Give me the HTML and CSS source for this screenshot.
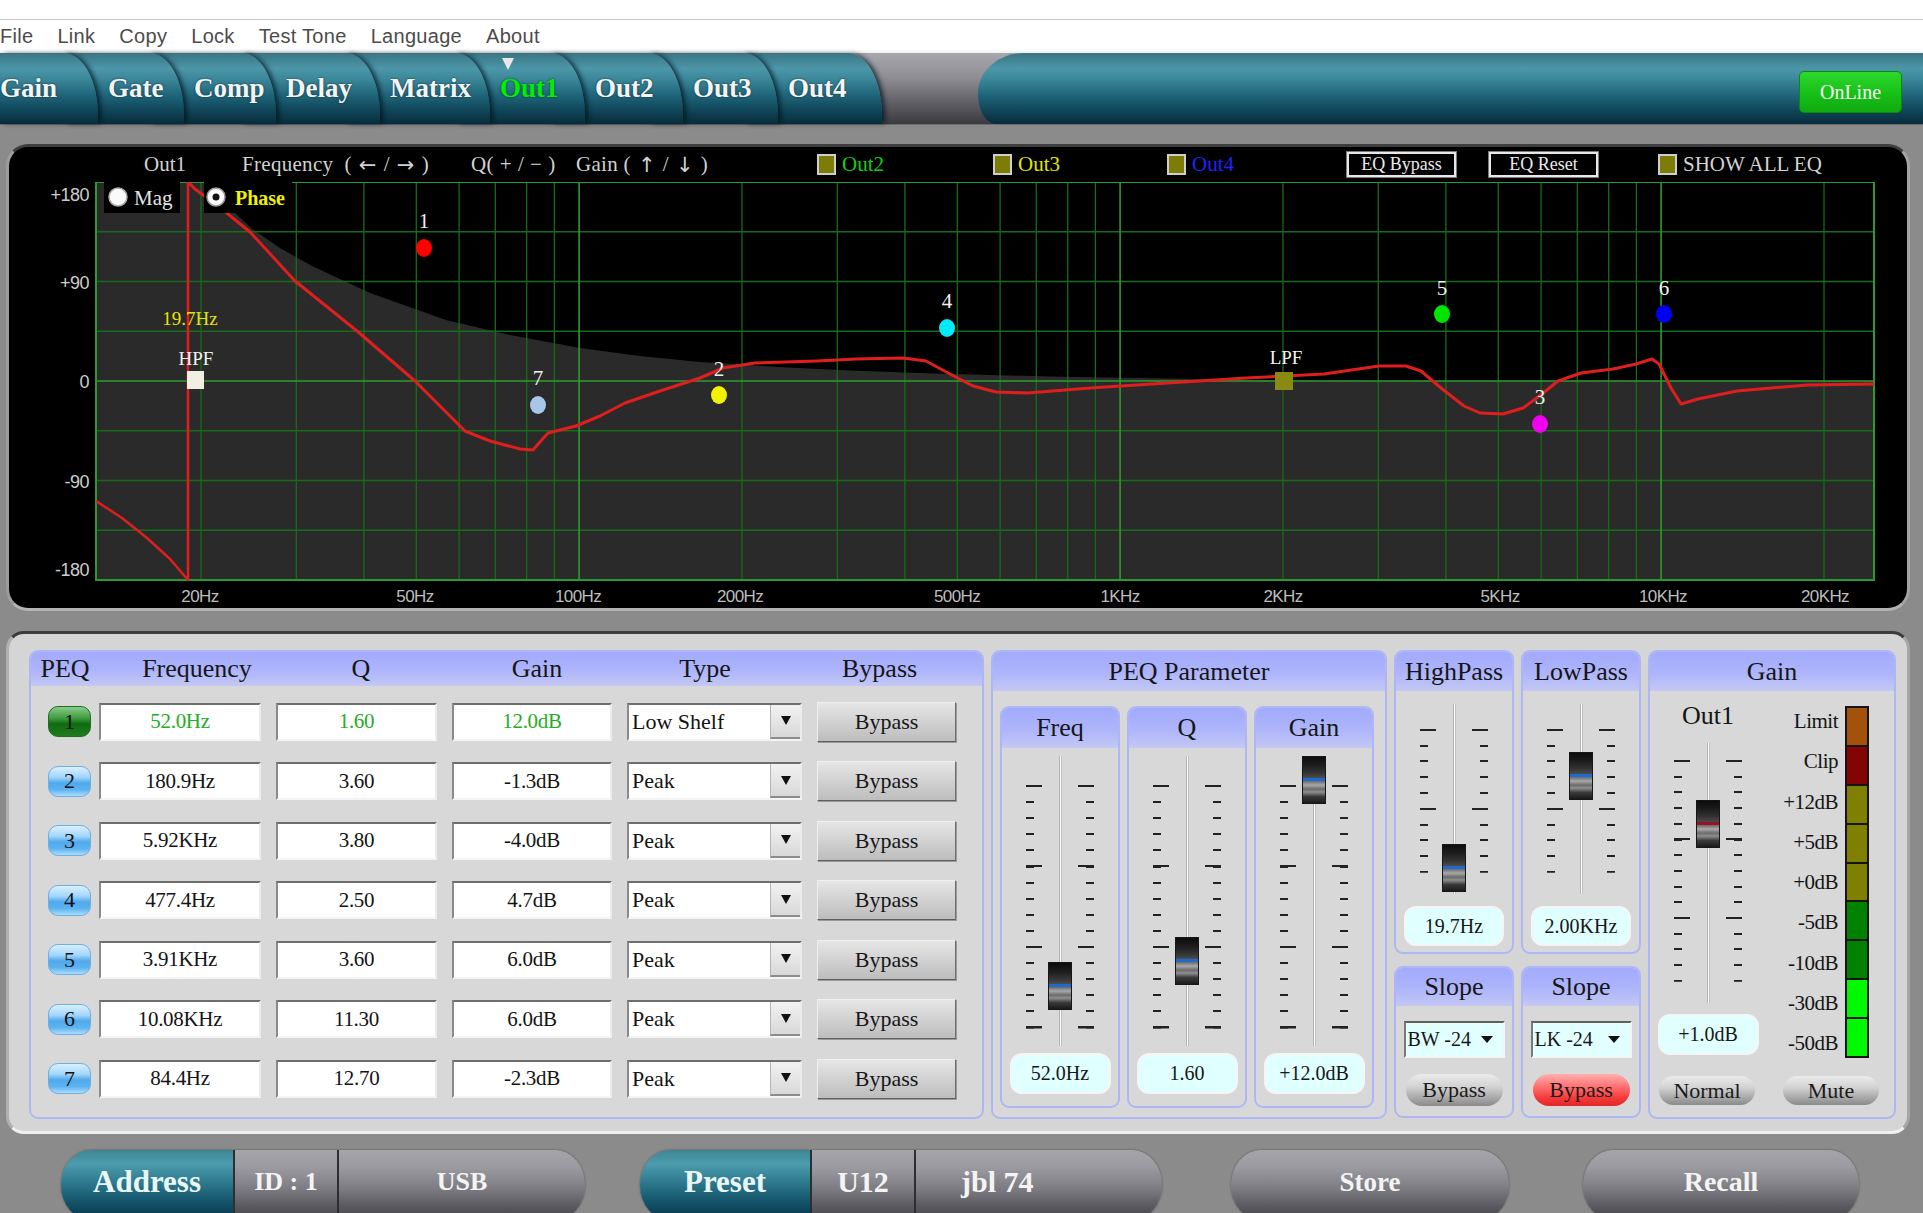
FILE: index.html
```html
<!DOCTYPE html>
<html>
<head>
<meta charset="utf-8">
<link rel="stylesheet" href="styles.css">
</head>
<body>
<div class="topline"></div>
<nav class="menubar">
  <span>File</span><span>Link</span><span>Copy</span><span>Lock</span><span>Test Tone</span><span>Language</span><span>About</span>
</nav>
<div class="tabbar">
  <div class="tabs">
    <div class="tab">Gain</div>
    <div class="tab">Gate</div>
    <div class="tab">Comp</div>
    <div class="tab">Delay</div>
    <div class="tab">Matrix</div>
    <div class="tab active">Out1</div>
    <div class="tab">Out2</div>
    <div class="tab">Out3</div>
    <div class="tab">Out4</div>
  </div>
  <div class="statusbar"><div class="online">OnLine</div></div>
</div>

<section class="graph">
  <div class="graph-head">
    <span class="gh">Out1</span>
    <span class="gh wide">Frequency&nbsp; (<span class="arr">←</span>/<span class="arr">→</span>)</span>
    <span class="gh wide">Q(<span class="arr2">+</span>/<span class="arr2">−</span>)</span>
    <span class="gh wide">Gain (<span class="arr">↑</span>/<span class="arr">↓</span>)</span>
    <span class="gh c-out2"><i class="chk"></i>Out2</span>
    <span class="gh c-out3"><i class="chk"></i>Out3</span>
    <span class="gh c-out4"><i class="chk"></i>Out4</span>
    <span class="gh"><span class="eqbtn">EQ Bypass</span></span>
    <span class="gh"><span class="eqbtn">EQ Reset</span></span>
    <span class="gh"><i class="chk"></i>SHOW ALL EQ</span>
  </div>
  <svg class="plot" width="1898" height="426" viewBox="9 181 1898 426" xmlns="http://www.w3.org/2000/svg">
    <rect x="96" y="181" width="1778" height="398" fill="#000"/>
    <path class="shade" d="M96 181 L214 181 L232 209 L252 228 L280 247 L312 265 L370 292 L446 319 L510 334 L580 347 L640 355 L700 361 L778 366 L850 369.5 L934 372.5 L1050 375.5 L1168 377.5 L1324 380 L1874 380 L1874 579 L96 579 Z"/>
    <path class="grid" d="M201 181V579M296.3 181V579M363.9 181V579M416.3 181V579M459.1 181V579M495.3 181V579M526.7 181V579M554.4 181V579M742 181V579M837.3 181V579M904.9 181V579M957.3 181V579M1000.1 181V579M1036.3 181V579M1067.7 181V579M1095.4 181V579M1283 181V579M1378.3 181V579M1445.9 181V579M1498.3 181V579M1541.1 181V579M1577.3 181V579M1608.7 181V579M1636.4 181V579M1824 181V579M96 230.75H1874M96 280.5H1874M96 330.25H1874M96 429.75H1874M96 479.5H1874M96 529.25H1874"/>
    <path class="grid-major" d="M579.1 181V579M1120.1 181V579M1661.1 181V579M96 380H1874"/>
    <rect class="frame" x="96" y="181" width="1778" height="398"/>

    <path class="phase-wrap" d="M96 500 L122 517 L147 537 L170 558 L188 579 L188 181"/>
    <path class="phase" d="M188 181 L195 188 L223 209 L250 231 L295 280 L357 330 L415 380 L445 410 L465 430 L490 440 L520 448 L533 449 L539 442 L548 432 L576 425 L600 415 L625 402 L660 390 L700 377 L723 367 L755 362 L817 360 L856 358 L903 357 L926 360 L950 373 L973 385 L996 391 L1028 392 L1090 387 L1168 382 L1246 377 L1285 375 L1324 373 L1379 365 L1406 365 L1421 370 L1441 387 L1464 405 L1480 412 L1503 413 L1523 407 L1542 393 L1558 380 L1581 372 L1613 368 L1636 363 L1652 358 L1659 363 L1671 387 L1681 403 L1698 398 L1737 390 L1808 384 L1874 383"/>

    <rect x="104" y="181" width="76" height="31" fill="#000"/>
    <circle cx="118" cy="196" r="9" fill="#fafafa" stroke="#aaa" stroke-width="1.5"/>
    <text class="mag" x="134" y="197">Mag</text>
    <rect x="204" y="181" width="88" height="31" fill="#000"/>
    <circle cx="216" cy="196" r="9" fill="#fafafa" stroke="#999" stroke-width="1.5"/>
    <circle cx="216" cy="196" r="3.5" fill="#111"/>
    <text class="phase-t" x="235" y="197">Phase</text>

    <text class="hz-y" x="190" y="317">19.7Hz</text>
    <text class="ptlab sm" x="196" y="357">HPF</text>
    <rect x="187" y="370" width="17" height="18" fill="#f2eee4"/>
    <text class="ptlab sm" x="1286" y="356">LPF</text>
    <rect x="1275" y="371" width="18" height="18" fill="#8a8a12"/>

    <text class="ptlab" x="424" y="220">1</text><ellipse cx="424" cy="247" rx="8" ry="9" fill="#ff0000"/>
    <text class="ptlab" x="538" y="377">7</text><ellipse cx="538" cy="404" rx="8" ry="9" fill="#a6c6ea"/>
    <text class="ptlab" x="719" y="368">2</text><ellipse cx="719" cy="394" rx="8" ry="9" fill="#f2f200"/>
    <text class="ptlab" x="947" y="300">4</text><ellipse cx="947" cy="327" rx="8" ry="9" fill="#00eaf8"/>
    <text class="ptlab" x="1442" y="287">5</text><ellipse cx="1442" cy="313" rx="8" ry="9" fill="#00e400"/>
    <text class="ptlab" x="1540" y="396">3</text><ellipse cx="1540" cy="423" rx="8" ry="9" fill="#f000f0"/>
    <text class="ptlab" x="1664" y="287">6</text><ellipse cx="1664" cy="313" rx="8" ry="9" fill="#0000f2"/>

    <text class="ylab" x="89" y="194">+180</text>
    <text class="ylab" x="89" y="282">+90</text>
    <text class="ylab" x="89" y="381">0</text>
    <text class="ylab" x="89" y="481">-90</text>
    <text class="ylab" x="89" y="569">-180</text>

    <text class="xlab" x="200" y="595">20Hz</text>
    <text class="xlab" x="415" y="595">50Hz</text>
    <text class="xlab" x="578" y="595">100Hz</text>
    <text class="xlab" x="740" y="595">200Hz</text>
    <text class="xlab" x="957" y="595">500Hz</text>
    <text class="xlab" x="1120" y="595">1KHz</text>
    <text class="xlab" x="1283" y="595">2KHz</text>
    <text class="xlab" x="1500" y="595">5KHz</text>
    <text class="xlab" x="1663" y="595">10KHz</text>
    <text class="xlab" x="1825" y="595">20KHz</text>
  </svg>
</section>

<section class="panel">
  <div class="sect peq">
    <div class="sect-h peq-h">
      <span>PEQ</span><span>Frequency</span><span>Q</span><span>Gain</span><span>Type</span><span class="bp-h">Bypass</span>
    </div>
    <div class="rows">
      <div class="row sel-row">
        <div class="badge green">1</div>
        <div class="fld">52.0Hz</div><div class="fld">1.60</div><div class="fld">12.0dB</div>
        <div class="sel"><span>Low Shelf</span><i class="sel-btn"></i></div>
        <div class="bpbtn">Bypass</div>
      </div>
      <div class="row">
        <div class="badge">2</div>
        <div class="fld">180.9Hz</div><div class="fld">3.60</div><div class="fld">-1.3dB</div>
        <div class="sel"><span>Peak</span><i class="sel-btn"></i></div>
        <div class="bpbtn">Bypass</div>
      </div>
      <div class="row">
        <div class="badge">3</div>
        <div class="fld">5.92KHz</div><div class="fld">3.80</div><div class="fld">-4.0dB</div>
        <div class="sel"><span>Peak</span><i class="sel-btn"></i></div>
        <div class="bpbtn">Bypass</div>
      </div>
      <div class="row">
        <div class="badge">4</div>
        <div class="fld">477.4Hz</div><div class="fld">2.50</div><div class="fld">4.7dB</div>
        <div class="sel"><span>Peak</span><i class="sel-btn"></i></div>
        <div class="bpbtn">Bypass</div>
      </div>
      <div class="row">
        <div class="badge">5</div>
        <div class="fld">3.91KHz</div><div class="fld">3.60</div><div class="fld">6.0dB</div>
        <div class="sel"><span>Peak</span><i class="sel-btn"></i></div>
        <div class="bpbtn">Bypass</div>
      </div>
      <div class="row">
        <div class="badge">6</div>
        <div class="fld">10.08KHz</div><div class="fld">11.30</div><div class="fld">6.0dB</div>
        <div class="sel"><span>Peak</span><i class="sel-btn"></i></div>
        <div class="bpbtn">Bypass</div>
      </div>
      <div class="row">
        <div class="badge">7</div>
        <div class="fld">84.4Hz</div><div class="fld">12.70</div><div class="fld">-2.3dB</div>
        <div class="sel"><span>Peak</span><i class="sel-btn"></i></div>
        <div class="bpbtn">Bypass</div>
      </div>
    </div>
  </div>

  <div class="sect param">
    <div class="sect-h">PEQ Parameter</div>
    <div class="subs">
      <div class="sect sub">
        <div class="sect-h sub-h">Freq</div>
        <div class="fader f-peq"><div class="knob" style="top:206px"></div></div>
        <div class="val">52.0Hz</div>
      </div>
      <div class="sect sub">
        <div class="sect-h sub-h">Q</div>
        <div class="fader f-peq"><div class="knob" style="top:181px"></div></div>
        <div class="val">1.60</div>
      </div>
      <div class="sect sub">
        <div class="sect-h sub-h">Gain</div>
        <div class="fader f-peq"><div class="knob" style="top:0px"></div></div>
        <div class="val">+12.0dB</div>
      </div>
    </div>
  </div>

  <div class="col">
    <div class="sect pass">
      <div class="sect-h">HighPass</div>
      <div class="fader f-pass"><div class="knob" style="top:140px"></div></div>
      <div class="val">19.7Hz</div>
    </div>
    <div class="sect slope">
      <div class="sect-h slope-h">Slope</div>
      <div class="slope-sel"><span>BW -24</span><i class="tri"></i></div>
      <div class="pillbtn">Bypass</div>
    </div>
  </div>

  <div class="col">
    <div class="sect pass">
      <div class="sect-h">LowPass</div>
      <div class="fader f-pass"><div class="knob" style="top:48px"></div></div>
      <div class="val">2.00KHz</div>
    </div>
    <div class="sect slope">
      <div class="sect-h slope-h">Slope</div>
      <div class="slope-sel"><span>LK -24</span><i class="tri"></i></div>
      <div class="pillbtn red">Bypass</div>
    </div>
  </div>

  <div class="sect gain">
    <div class="sect-h">Gain</div>
    <div class="gain-body">
      <div class="gain-fadercol">
        <div class="out-label">Out1</div>
        <div class="fader f-gain"><div class="knob red" style="top:57px"></div></div>
        <div class="val">+1.0dB</div>
      </div>
      <div class="meter-labels">
        <span>Limit</span><span>Clip</span><span>+12dB</span><span>+5dB</span><span>+0dB</span><span>-5dB</span><span>-10dB</span><span>-30dB</span><span>-50dB</span>
      </div>
      <div class="meter">
        <i class="m-limit"></i><i class="m-clip"></i><i class="m-olive"></i><i class="m-olive"></i><i class="m-olive"></i><i class="m-green"></i><i class="m-green"></i><i class="m-lime"></i><i class="m-lime"></i>
      </div>
    </div>
    <div class="gain-btns"><div class="pillbtn">Normal</div><div class="pillbtn">Mute</div></div>
  </div>
</section>

<footer class="bottombar">
  <div class="pill addr">
    <div class="seg teal s-addr">Address</div>
    <div class="seg grey s-id">ID : 1</div>
    <div class="seg grey s-usb">USB</div>
  </div>
  <div class="pill preset">
    <div class="seg teal s-preset">Preset</div>
    <div class="seg grey s-u12">U12</div>
    <div class="seg grey s-name">jbl 74</div>
  </div>
  <div class="pill single store"><div class="seg grey">Store</div></div>
  <div class="pill single recall"><div class="seg grey">Recall</div></div>
</footer>
</body>
</html>
```

FILE: styles.css
```css
html, body {
  margin: 0;
  padding: 0;
}
body {
  width: 1923px;
  height: 1213px;
  overflow: hidden;
  background: #8b8b8b;
  font-family: "Liberation Serif", "Times New Roman", serif;
  color: #141414;
}

/* ---------- top menu ---------- */
.topline {
  height: 19px;
  background: #fff;
  border-bottom: 1px solid #c6c6c6;
}
.menubar {
  height: 33px;
  background: linear-gradient(#fff 0, #fff 88%, #efefef 100%);
  display: flex;
  align-items: center;
  gap: 24px;
  font-family: "Liberation Sans", Arial, sans-serif;
  font-size: 20px;
  letter-spacing: 0.3px;
  color: #4c4c4c;
}

/* ---------- tab bar ---------- */
.tabbar {
  height: 71px;
  display: flex;
  background: linear-gradient(#a7a7ad 0%, #8d8d93 35%, #5f5f65 70%, #3a3a3f 100%);
  border-bottom: 1px solid #6c6c6c;
}
.tabs {
  display: flex;
  width: 882px;
  flex: none;
}
.tab {
  position: relative;
  flex: none;
  height: 71px;
  display: flex;
  align-items: center;
  box-sizing: border-box;
  margin-left: -36px;
  padding-left: 46px;
  font-weight: bold;
  font-size: 27px;
  color: #f4f4f4;
  text-shadow: 0 0 2px #0a2a36;
  background: linear-gradient(#3a7482 0%, #4b97a9 22%, #3a8598 38%, #1f6479 60%, #0f4457 82%, #072c3c 100%);
  border-top-right-radius: 34px 62px;
  box-shadow: 4px 0 5px -1px rgba(0, 18, 28, 0.75);
}
.tab:nth-child(1) { margin-left: 0; padding-left: 0; width: 98px; z-index: 9; }
.tab:nth-child(2) { width: 122px; z-index: 8; }
.tab:nth-child(3) { width: 128px; z-index: 7; }
.tab:nth-child(4) { width: 140px; z-index: 6; }
.tab:nth-child(5) { width: 146px; z-index: 5; }
.tab:nth-child(6) { width: 131px; z-index: 4; }
.tab:nth-child(7) { width: 134px; z-index: 3; }
.tab:nth-child(8) { width: 131px; z-index: 2; }
.tab:nth-child(9) { width: 140px; z-index: 1; }
.tab.active { color: #00f000; }
.tab.active::before {
  content: "";
  position: absolute;
  left: 48px;
  top: 5px;
  border-left: 6px solid transparent;
  border-right: 6px solid transparent;
  border-top: 12px solid #e8e8e8;
}
.statusbar {
  flex: 1;
  margin-left: 96px;
  display: flex;
  justify-content: flex-end;
  align-items: flex-start;
  padding: 18px 21px 0 0;
  background: linear-gradient(#3a7482 0%, #4b97a9 22%, #3a8598 38%, #1f6479 60%, #0f4457 82%, #072c3c 100%);
  border-radius: 46px 0 0 18px / 40px 0 0 30px;
}
.online {
  width: 103px;
  height: 42px;
  box-sizing: border-box;
  border: 1px solid #0b8a0b;
  border-radius: 5px;
  background: linear-gradient(#2ed82e, #15bd15 60%, #10aa10);
  color: #f4fff4;
  font-size: 20px;
  display: flex;
  align-items: center;
  justify-content: center;
}

/* ---------- graph ---------- */
.graph {
  margin: 19px 0 0 6px;
  width: 1904px;
  height: 467px;
  box-sizing: border-box;
  background: #000;
  border: 3px solid;
  border-color: #3e3e3e #a4a4a4 #b4b4b4 #9c9c9c;
  border-radius: 22px;
}
.graph-head {
  height: 35px;
  box-sizing: border-box;
  padding-left: 135px;
  display: grid;
  grid-template-columns: 98px 229px 105px 241px 176px 174px 180px 142px 169px auto;
  align-items: center;
  font-size: 21px;
  color: #d2d2d2;
}
.gh {
  display: flex;
  align-items: center;
  white-space: nowrap;
}
.gh.wide { letter-spacing: 0.3px; }
.arr {
  font-family: "DejaVu Sans", sans-serif;
  font-size: 21px;
  padding: 0 7px;
}
.arr2 {
  padding: 0 6px;
}
.chk {
  display: inline-block;
  width: 15px;
  height: 17px;
  background: #7c7c06;
  border: 2px solid #cfcfcf;
  margin-right: 6px;
}
.c-out2 { color: #10d010; }
.c-out3 { color: #e2e200; }
.c-out4 { color: #2020ff; }
.eqbtn {
  display: flex;
  align-items: center;
  justify-content: center;
  width: 109px;
  height: 25px;
  box-sizing: border-box;
  border: 2px solid #e8e8e8;
  box-shadow: 0 0 0 1px #7a7a7a;
  font-size: 18px;
  color: #eaeaea;
}
.plot { display: block; }
.shade { fill: #2a2a2a; }
.grid { stroke: #176c17; stroke-width: 1.3; fill: none; }
.grid-major { stroke: #2f9a2f; stroke-width: 1.6; fill: none; }
.frame { fill: none; stroke: #2c9a2c; stroke-width: 2; }
.phase, .phase-wrap {
  fill: none;
  stroke: #e01e1e;
  stroke-width: 3;
  stroke-linejoin: round;
}
.phase-wrap { stroke-width: 2.5; }
.mag {
  font-family: "Liberation Serif", serif;
  font-size: 21px;
  fill: #e4e4e4;
  dominant-baseline: central;
}
.phase-t {
  font-family: "Liberation Serif", serif;
  font-size: 20px;
  font-weight: bold;
  fill: #f0f000;
  dominant-baseline: central;
}
.hz-y {
  font-family: "Liberation Serif", serif;
  font-size: 19px;
  fill: #e6e600;
  text-anchor: middle;
  dominant-baseline: central;
}
.ptlab {
  font-family: "Liberation Serif", serif;
  font-size: 21px;
  fill: #f2f2f2;
  text-anchor: middle;
  dominant-baseline: central;
}
.ptlab.sm { font-size: 19px; }
.ylab {
  font-family: "Liberation Sans", Arial, sans-serif;
  font-size: 18px;
  fill: #cdcdcd;
  text-anchor: end;
  dominant-baseline: central;
  letter-spacing: -0.5px;
}
.xlab {
  font-family: "Liberation Sans", Arial, sans-serif;
  font-size: 17px;
  fill: #bdbdbd;
  text-anchor: middle;
  dominant-baseline: central;
  letter-spacing: -0.6px;
}

/* ---------- lower panel ---------- */
.panel {
  margin: 20px 0 0 6px;
  width: 1904px;
  height: 503px;
  box-sizing: border-box;
  border: 3px solid;
  border-color: #3c3c3c #a6a6a6 #efefef #b0b0b0;
  border-radius: 18px;
  background: #d5d5d5;
  padding: 16px 0 0 20px;
  display: flex;
  align-items: flex-start;
  gap: 7px;
}
.sect {
  box-sizing: border-box;
  background: #d8d8d8;
  border: 2px solid #afb6f6;
  border-radius: 9px;
}
.sect-h {
  height: 39px;
  display: flex;
  align-items: center;
  justify-content: center;
  background: linear-gradient(#a2aafc 0%, #aeb5fb 55%, #c3c8f3 100%);
  border-radius: 7px 7px 0 0;
  font-size: 26px;
  color: #161616;
}

/* PEQ table */
.peq { width: 955px; height: 469px; }
.peq-h {
  height: 34px;
  display: grid;
  grid-template-columns: 68px 196px 132px 220px 116px 1fr;
  justify-items: center;
}
.peq-h .bp-h { justify-self: start; padding-left: 79px; }
.rows {
  padding: 6px 0 0 17px;
  display: grid;
  grid-auto-rows: 59.5px;
}
.row {
  display: grid;
  grid-template-columns: 36px 162px 161px 160px 175px 139px;
  column-gap: 15px;
  align-items: center;
}
.badge {
  width: 43px;
  height: 31px;
  box-sizing: border-box;
  border-radius: 10px;
  border: 1px solid #6eaee0;
  background: linear-gradient(#d9f0ff 0%, #a3d6fb 35%, #50a9ec 55%, #5cb3f0 78%, #acdcff 100%);
  display: flex;
  align-items: center;
  justify-content: center;
  font-size: 22px;
  color: #111;
}
.badge.green {
  border-color: #1f6e1f;
  background: linear-gradient(#8acb8a 0%, #3c9a3c 40%, #116a11 58%, #1e7c1e 100%);
}
.fld {
  height: 38px;
  box-sizing: border-box;
  background: #fff;
  border: 2px solid;
  border-color: #6e6e6e #ececec #f4f4f4 #8a8a8a;
  display: flex;
  align-items: center;
  justify-content: center;
  font-size: 21px;
  color: #141414;
  letter-spacing: -0.3px;
}
.sel-row .fld { color: #25ad25; }
.sel {
  height: 38px;
  box-sizing: border-box;
  background: #fff;
  border: 2px solid;
  border-color: #6e6e6e #ececec #f4f4f4 #8a8a8a;
  display: flex;
  align-items: center;
  justify-content: space-between;
  padding-left: 3px;
  font-size: 22px;
  color: #141414;
}
.sel-btn {
  width: 30px;
  height: 34px;
  box-sizing: border-box;
  background: linear-gradient(#f2f2f2, #d8d8d8);
  border-left: 1px solid #b4b4b4;
  border-bottom: 2px solid #8c8c8c;
  display: flex;
  align-items: center;
  justify-content: center;
}
.sel-btn::after {
  content: "";
  border-left: 5px solid transparent;
  border-right: 5px solid transparent;
  border-top: 9px solid #111;
}
.bpbtn {
  height: 40px;
  box-sizing: border-box;
  background: linear-gradient(#e6e6e6, #cdcdcd 60%, #bdbdbd);
  border: 1px solid;
  border-color: #f0f0f0 #6f6f6f #5f5f5f #efefef;
  box-shadow: 1px 1px 0 #9a9a9a;
  display: flex;
  align-items: center;
  justify-content: center;
  font-size: 22px;
  color: #161616;
}

/* PEQ parameter */
.param { width: 396px; height: 469px; }
.subs {
  display: flex;
  gap: 7px;
  padding: 15px 0 0 7px;
}
.sub {
  width: 120px;
  height: 402px;
  display: flex;
  flex-direction: column;
  align-items: center;
}
.sub-h {
  align-self: stretch;
  height: 40px;
  font-size: 26px;
}
.sub .fader { margin-top: 8px; }
.sub .val { margin-top: 7px; }

/* faders */
.fader {
  position: relative;
  width: 116px;
  height: var(--h);
  flex: none;
  background:
    linear-gradient(90deg, #8e8e8e, #fcfcfc 50%, #a0a0a0) 57px 0 / 3px 100% no-repeat,
    repeating-linear-gradient(#222 0 2px, transparent 2px var(--s)) 24px var(--t) / 8px var(--th) no-repeat,
    repeating-linear-gradient(#222 0 2px, transparent 2px var(--s)) 84px var(--t) / 8px var(--th) no-repeat,
    repeating-linear-gradient(#222 0 2px, transparent 2px calc(var(--s) * 5)) 24px var(--t) / 16px var(--th) no-repeat,
    repeating-linear-gradient(#222 0 2px, transparent 2px calc(var(--s) * 5)) 76px var(--t) / 16px var(--th) no-repeat;
}
.f-peq { --h: 290px; --t: 29px; --s: 16.1px; --th: 243.5px; }
.f-pass { --h: 190px; --t: 25px; --s: 15.75px; --th: 143.75px; }
.f-gain { --h: 260px; --t: 17px; --s: 15.7px; --th: 221.8px; }
.knob {
  position: absolute;
  left: 46px;
  width: 24px;
  height: 48px;
  box-sizing: border-box;
  border: 1px solid #161616;
  background: linear-gradient(#0c0c0c 0%, #1d1d1d 18%, #333 34%, #4a4a4a 45%, #1e6bd0 46%, #1e6bd0 51%, #6e6e6e 53%, #a9a9a9 61%, #6a6a6a 70%, #909090 76%, #3a3a3a 86%, #1a1a1a 100%);
}
.knob.red {
  background: linear-gradient(#0c0c0c 0%, #1d1d1d 18%, #333 34%, #4a4a4a 45%, #9c1022 46%, #9c1022 51%, #6e6e6e 53%, #a9a9a9 61%, #6a6a6a 70%, #909090 76%, #3a3a3a 86%, #1a1a1a 100%);
}
.val {
  width: 101px;
  height: 41px;
  flex: none;
  box-sizing: border-box;
  background: #e0ffff;
  border: 2px solid #f5f5f5;
  border-radius: 12px;
  display: flex;
  align-items: center;
  justify-content: center;
  font-size: 20px;
  color: #161616;
}

/* high / low pass */
.col {
  width: 120px;
  display: flex;
  flex-direction: column;
  gap: 12px;
}
.pass {
  height: 304px;
  display: flex;
  flex-direction: column;
  align-items: center;
}
.pass .sect-h { align-self: stretch; }
.pass .fader { margin-top: 13px; }
.pass .val { margin-top: 12px; width: 100px; height: 40px; }
.slope {
  height: 152px;
  display: flex;
  flex-direction: column;
  align-items: center;
}
.slope-h { align-self: stretch; height: 38px; }
.slope-sel {
  margin-top: 15px;
  width: 101px;
  height: 37px;
  box-sizing: border-box;
  background: #e2ffff;
  border: 2px solid;
  border-color: #606060 #f4f4f4 #f4f4f4 #7a7a7a;
  display: flex;
  align-items: center;
  justify-content: space-between;
  padding: 0 10px 0 2px;
  font-size: 20px;
  color: #161616;
}
.tri {
  border-left: 6px solid transparent;
  border-right: 6px solid transparent;
  border-top: 7px solid #111;
}
.pillbtn {
  width: 97px;
  height: 32px;
  box-sizing: border-box;
  border-radius: 16px;
  background: linear-gradient(#ececec 0%, #d2d2d2 40%, #a8a8a8 75%, #8a8a8a 100%);
  display: flex;
  align-items: center;
  justify-content: center;
  font-size: 22px;
  color: #1a1a1a;
}
.slope .pillbtn { margin-top: 16px; }
.pillbtn.red {
  background: linear-gradient(#ffb0b0 0%, #ff7070 40%, #f43a3a 75%, #e42626 100%);
}

/* gain */
.gain {
  width: 248px;
  height: 469px;
}
.gain-body {
  display: flex;
  padding-top: 10px;
}
.gain-fadercol {
  width: 116px;
  display: flex;
  flex-direction: column;
  align-items: center;
}
.out-label {
  height: 30px;
  line-height: 30px;
  font-size: 26px;
}
.gain-fadercol .fader { margin-top: 12px; }
.gain-fadercol .val { margin-top: 11px; }
.meter-labels {
  width: 72px;
  height: 357px;
  display: flex;
  flex-direction: column;
  align-items: flex-end;
}
.meter-labels span {
  height: 40.3px;
  flex: none;
  line-height: 40px;
  font-size: 21px;
  letter-spacing: -0.5px;
  white-space: nowrap;
}
.meter {
  margin: 5px 0 0 7px;
  width: 24px;
  height: 352px;
  box-sizing: border-box;
  background: #141414;
  padding: 2px;
  display: flex;
  flex-direction: column;
  gap: 2px;
}
.meter i { flex: 1; display: block; }
.m-limit { background: #a4520a; }
.m-clip { background: #820404; }
.m-olive { background: #808000; }
.m-green { background: #008200; }
.m-lime { background: #00f800; }
.gain-btns {
  display: flex;
  gap: 28px;
  padding: 18px 0 0 9px;
}
.gain-btns .pillbtn { width: 96px; height: 29px; }

/* ---------- bottom bar ---------- */
.bottombar {
  margin-top: 16px;
  padding-left: 61px;
  display: flex;
  align-items: flex-start;
}
.pill {
  display: flex;
  height: 70px;
  border-radius: 34px / 40px;
  overflow: hidden;
  box-shadow: 0 0 2px rgba(0, 0, 0, 0.5);
}
.addr { width: 524px; }
.preset { width: 522px; margin-left: 55px; }
.store { width: 278px; margin-left: 69px; }
.recall { width: 276px; margin-left: 74px; }
.seg {
  height: 70px;
  line-height: 64px;
  text-align: center;
  font-weight: bold;
  font-size: 26px;
  color: #f4f4f4;
  box-sizing: border-box;
}
.seg.teal {
  background: linear-gradient(#3e8595 0%, #4b9cad 20%, #2f7b90 45%, #15566c 72%, #08344a 100%);
  font-size: 31px;
  color: #eaf6f6;
}
.seg.grey {
  background: linear-gradient(#a4a4a9 0%, #9a9aa0 25%, #7c7c82 55%, #5a5a60 80%, #44444a 100%);
}
.seg + .seg { border-left: 2px solid #2e2e32; }
.s-addr { width: 172px; }
.s-id { width: 104px; }
.s-usb { flex: 1; }
.s-preset { width: 170px; }
.s-u12 { width: 104px; font-size: 30px; }
.s-name { flex: 1; text-align: left; padding-left: 45px; font-size: 30px; }
.single .seg { flex: 1; font-size: 27px; }
.recall .seg { font-size: 28px; }
```
